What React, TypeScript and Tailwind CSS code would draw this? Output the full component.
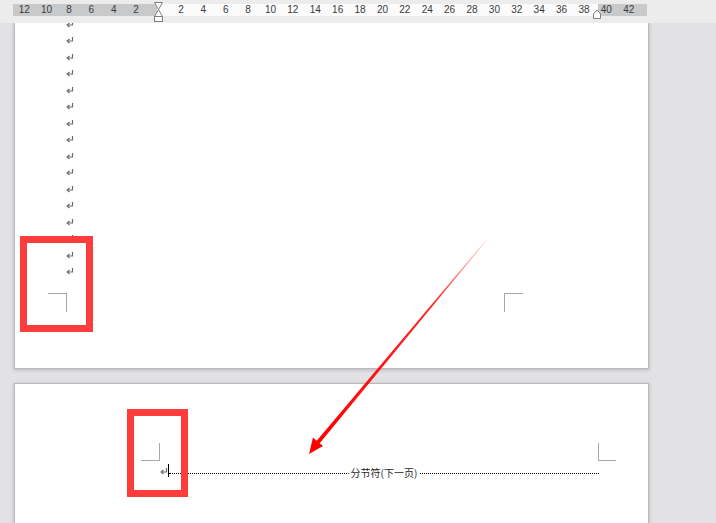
import React from "react";

const left = [12, 10, 8, 6, 4, 2];
const right = [2, 4, 6, 8, 10, 12, 14, 16, 18, 20, 22, 24, 26, 28, 30, 32, 34, 36, 38, 40, 42];

function ParaMark() {
  return (
    <svg width="8" height="7" viewBox="0 0 8 7" className="block">
      <path d="M6.5 0 V4 H1.5" fill="none" stroke="#6a6a6a" strokeWidth="1.2" />
      <path d="M3.5 2 L1.2 4 L3.5 6" fill="none" stroke="#6a6a6a" strokeWidth="1.2" />
    </svg>
  );
}

function Ruler() {
  const labels = [...left.map(String), "", ...right.map(String)];
  return (
    <div className="h-[23px] bg-[#ececed] relative">
      <div className="absolute left-[13px] top-[4px] w-[634px] h-[12px] flex">
        <div className="w-[144px] bg-[#c8c9cb]" />
        <div className="w-[441px] bg-[#fbfbfb]" />
        <div className="flex-1 bg-[#c8c9cb]" />
      </div>
      <div
        className="absolute left-[13px] top-[4px] h-[12px] flex text-[10px] leading-[12px] text-[#3a3a3a]"
        style={{ fontFamily: '"Liberation Sans", Arial, sans-serif' }}
      >
        {labels.map((l, i) => (
          <span key={i} className="w-[22.4px] text-center">
            {l}
          </span>
        ))}
      </div>
      {/* first line / hanging indent marker */}
      <svg className="absolute left-[153px] top-[1px]" width="11" height="22" viewBox="0 0 11 22">
        <path d="M1.5 1.5 H9.5 L5.5 8.5 Z" fill="#fff" stroke="#808080" />
        <path d="M5.5 8.5 L9.5 15.5 H1.5 Z" fill="#fff" stroke="#808080" />
        <rect x="1.5" y="15.5" width="8" height="5" fill="#fff" stroke="#808080" />
      </svg>
      {/* right indent marker */}
      <svg className="absolute left-[592px] top-[9px]" width="10" height="10" viewBox="0 0 10 10">
        <path d="M1.5 9.5 V5 L5 1 L8.5 5 V9.5 Z" fill="#fff" stroke="#808080" />
      </svg>
    </div>
  );
}

export default function App() {
  return (
    <div className="w-[716px] h-[523px] overflow-hidden relative bg-[#e2e2e4]">
      <Ruler />

      <div className="flex flex-col gap-[14px] pl-[14px]">
        {/* page 1 */}
        <div className="w-[635px] h-[346px] bg-white overflow-hidden border-r border-b border-l border-[#b9b9bb] shadow-[0_1px_4px_rgba(0,0,0,0.2)]">
          <div className="mt-[-7px] pl-[51px] flex flex-col">
            {Array.from({ length: 16 }).map((_, i) => (
              <div key={i} className="h-[16.5px] flex items-center">
                <ParaMark />
              </div>
            ))}
          </div>
          <div className="mt-[13px] pl-[33px] flex">
            <div className="w-[19px] h-[19px] border-t border-r border-[#a8a8a8]" />
            <div className="ml-[437px] w-[19px] h-[19px] border-t border-l border-[#a8a8a8]" />
          </div>
        </div>

        {/* page 2 */}
        <div className="w-[635px] h-[160px] bg-white border-l border-r border-t border-[#b9b9bb] shadow-[0_1px_4px_rgba(0,0,0,0.2)]">
          <div className="pt-[59px] pl-[126px] flex">
            <div className="w-[19px] h-[18px] border-b border-r border-[#a8a8a8]" />
            <div className="ml-[438px] w-[18px] h-[18px] border-b border-l border-[#a8a8a8]" />
          </div>
          <div className="mt-[2px] pl-[145px] flex items-end h-[14px]">
            <div className="mb-[2px]">
              <ParaMark />
            </div>
            <div className="w-[1px] h-[13px] bg-black" />
            <div className="relative w-[430px] h-[10px] border-b border-dotted border-black mb-[3px]">
              <span
                className="absolute left-1/2 -translate-x-1/2 top-[3px] bg-white px-[2px] text-[10px] leading-[12px] text-[#1f1f1f] whitespace-nowrap"
                style={{ fontFamily: '"Noto Sans CJK SC", "Liberation Sans", sans-serif' }}
              >
                分节符(下一页)
              </span>
            </div>
          </div>
        </div>
      </div>

      {/* annotations */}
      <div className="absolute left-[20px] top-[236px] w-[73px] h-[96px] border-[7px] border-[#fd3c3c]" />
      <div className="absolute left-[127px] top-[409px] w-[61px] h-[88px] border-[7px] border-[#fd3c3c]" />

      <svg className="absolute inset-0 pointer-events-none" width="716" height="523" viewBox="0 0 716 523">
        <defs>
          <linearGradient id="arr" x1="486" y1="240" x2="310" y2="453" gradientUnits="userSpaceOnUse">
            <stop offset="0" stopColor="#ff0000" stopOpacity="0.15" />
            <stop offset="0.3" stopColor="#ff0000" stopOpacity="0.85" />
            <stop offset="1" stopColor="#ff0000" />
          </linearGradient>
        </defs>
        <polygon points="486,240 486.6,240.5 319.5,443.5 316.5,441" fill="url(#arr)" />
        <polygon points="309,454 313,437.5 323,446" fill="#ff0000" />
      </svg>
    </div>
  );
}
